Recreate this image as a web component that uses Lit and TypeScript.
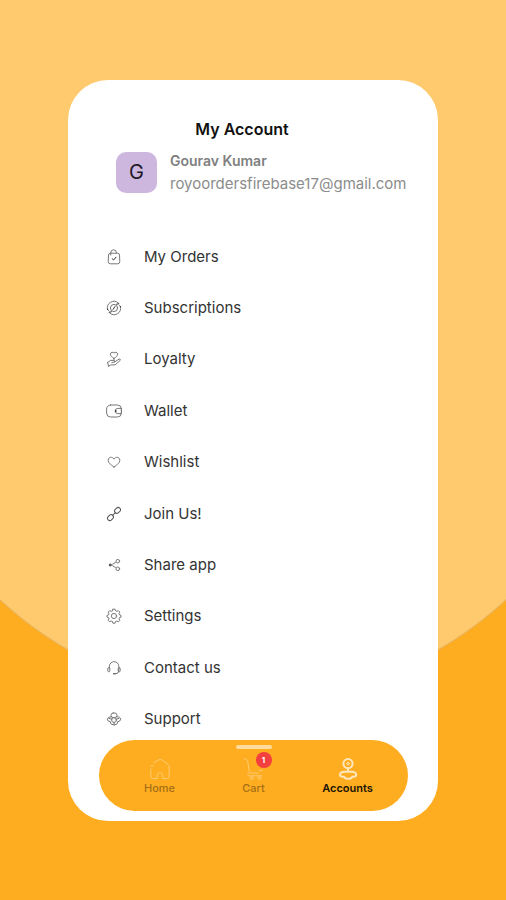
import { LitElement, html, css, svg, nothing, type SVGTemplateResult } from "lit";
import { customElement } from "lit/decorators.js";
import { classMap } from "lit/directives/class-map.js";

interface Entry {
  label: string;
  icon: SVGTemplateResult;
}

interface Tab extends Entry {
  active?: boolean;
  marked?: boolean;
  count?: number;
}

const entries: Entry[] = [
  {
    label: "My Orders",
    icon: svg`<path d="M4.4 4.2h7.2q1.8 0 1.9 1.8l.3 6.4q0 2.4-2.2 2.4H4.4q-2.2 0-2.2-2.4L2.500 6q.1-1.800 1.900-1.800z"/><path d="M4.800 6V3.600a2.800 2.800 0 0 1 5.600 0V4.200"/><path class="strong" d="M6.200 9.700l1.400 1.300 2.400-2.800"/>`,
  },
  {
    label: "Subscriptions",
    icon: svg`<path d="M1.600 9.600A6.600 6.600 0 0 1 12.600 3.200M14.400 6.400A6.600 6.600 0 0 1 3.400 12.800"/><circle cx="8" cy="8" r="3.600"/><path class="strong" d="M10.600 4.200l2.200-.4M5.400 11.800l-2.200.4M1.200 9.200l1.200 1M14.800 6.800l-1.200-1M9 6.600L7 9.400"/>`,
  },
  {
    label: "Loyalty",
    icon: svg`<path d="M8 7.400C5.600 5.800 4.400 4.800 4.400 3.200 4.400 1 7.200.6 8 2.200 8.800.6 11.600 1 11.600 3.200c0 1.600-1.200 2.600-3.600 4.200z"/><path d="M8 7.400v2"/><path d="M1.600 11.400l3-2h3.200q1.600.2.6 1.600l-2.600.6M8.600 11l4.600-3q1.600 0 1 1.400l-5 4.400-4.600.2-2 1.200M1.600 11.400l1 3.800"/>`,
  },
  {
    label: "Wallet",
    icon: svg`<rect x=".6" y="2" width="14.800" height="12" rx="4"/><path d="M15 5.400h-3.200a2.600 2.600 0 0 0 0 5.200H15z"/><circle class="strong" cx="9.600" cy="8" r=".4"/>`,
  },
  {
    label: "Wishlist",
    icon: svg`<path d="M8 13C4.400 10.600 2.200 8.600 2.200 6.200 2.200 2.800 6.600 2.200 8 5.200 9.400 2.200 13.800 2.800 13.800 6.200 13.800 8.600 11.600 10.600 8 13z"/>`,
  },
  {
    label: "Join Us!",
    icon: svg`<g class="medium" transform="rotate(-45 8 8)"><rect x="-.2" y="5.700" width="6.400" height="4.600" rx="2.300"/><rect x="9.800" y="5.700" width="6.400" height="4.600" rx="2.300"/><path d="M5.600 8h4.800"/></g>`,
  },
  {
    label: "Share app",
    icon: svg`<path d="M6.600 7.200l2.800-1.600M6.600 8.800l2.800 1.600"/><circle class="strong" cx="4.200" cy="8" r="1"/><circle cx="11.800" cy="4.200" r="1.800"/><circle cx="11.800" cy="11.800" r="1.800"/>`,
  },
  {
    label: "Settings",
    icon: svg`<path d="M6.900 1.200h2.200l.4 1.600 1.300.6 1.500-.8 1.500 1.500-.8 1.500.5 1.300 1.500.4v1.800l-1.500.5-.5 1.200.8 1.500-1.500 1.500-1.500-.8-1.300.5-.4 1.700H6.900l-.4-1.700-1.300-.5-1.500.8-1.500-1.500.8-1.500-.5-1.200L1 9.100V7.300l1.500-.4L3 5.600l-.8-1.500 1.500-1.500 1.500.8 1.300-.6z"/><circle cx="8" cy="8" r="2.600"/>`,
  },
  {
    label: "Contact us",
    icon: svg`<path d="M3.400 8.200V6.400a4.700 4.700 0 0 1 9.400 0v4.600q0 2.600-3.400 2.800"/><rect x="1.800" y="7.600" width="2" height="4.200" rx="1"/><rect x="12.200" y="7.600" width="2" height="4.200" rx="1"/><path class="strong" d="M7.400 13.800h1.800"/>`,
  },
  {
    label: "Support",
    icon: svg`<rect x="5" y="2" width="6" height="4.600" rx="2.200"/><path d="M5.400 5.800Q1.600 5.600 1.400 8.200q0 2.200 2.400 2.400M10.800 5.800q3.800-.2 3.800 2.400 0 2.200-2.400 2.400"/><circle cx="8" cy="9" r="2.400"/><path d="M4 10.600q.2 3.400 4 3.400t4-3.400M5.800 8.200L3 7.400M10.200 8.200l2.800-.8M8 11.400V14"/>`,
  },
];

const tabs: Tab[] = [
  {
    label: "Home",
    icon: svg`<path d="M1.800 11v7.600q0 1.900 2 1.900h4.400v-3.200q0-2.600 2.800-2.600t2.800 2.600v3.200h4.400q2 0 2-1.900V8.600q0-1.300-1-2l-6.200-4.600q-1.800-1.200-3.600 0L5 4.600M1.800 8h2.600"/>`,
  },
  {
    label: "Cart",
    icon: svg`<path d="M1.400.8q3 .4 3.400 3l1.400 9.600q.2 1.600 2 1.600H15M16.400 12.400h3.200M5.400 15q-1.800 2.800 1.200 2.800h12"/><circle cx="8.600" cy="20" r="1.500"/><circle cx="16.400" cy="20" r="1.500"/>`,
    marked: true,
    count: 1,
  },
  {
    label: "Accounts",
    icon: svg`<circle cx="11" cy="5.600" r="4.600"/><circle class="thin" cx="11" cy="5.600" r="1.200"/><path d="M11 10.200v3.400M6.800 13.800h8.400q4 .4 4 3 0 2-3 2h-1q-.8 2-4.200 2t-3.800-2H6q-3 0-3-2 0-2.600 3.800-3z"/>`,
    active: true,
  },
];

@customElement("account-menu")
export class AccountMenu extends LitElement {
  static styles = css`
    :host {
      display: flex;
      flex: 1;
    }
    .list {
      flex: 1;
      display: grid;
      grid-auto-rows: 1fr;
      margin: 0;
      padding: 0 0 0 38px;
      list-style: none;
    }
    .row {
      display: flex;
    }
    .link {
      flex: 1;
      display: flex;
      align-items: center;
      gap: 22px;
      color: #333;
      font-size: 15px;
      line-height: 20px;
      text-decoration: none;
    }
    .icon {
      width: 16px;
      height: 16px;
      fill: none;
      stroke: #777;
      stroke-width: 1;
      stroke-linecap: round;
      stroke-linejoin: round;
    }
    .medium {
      stroke: #555;
    }
    .strong {
      stroke: #333;
    }
  `;

  render() {
    return html`
      <ul class="list">
        ${entries.map(
          (entry) => html`
            <li class="row">
              <a class="link" href="#">
                <svg class="icon" viewBox="0 0 16 16" aria-hidden="true">${entry.icon}</svg>
                <span>${entry.label}</span>
              </a>
            </li>
          `
        )}
      </ul>
    `;
  }
}

@customElement("tab-bar")
export class TabBar extends LitElement {
  static styles = css`
    :host {
      display: block;
    }
    .bar {
      display: flex;
      justify-content: center;
      border-radius: 36px;
      background: #ffad20;
    }
    .tab {
      position: relative;
      flex: 0 1 94px;
      display: flex;
      flex-direction: column;
      align-items: center;
      gap: 1px;
      padding: 18px 0 16px;
      color: #a56f16;
      font-size: 11px;
      font-weight: 500;
      line-height: 14px;
      text-decoration: none;
    }
    .icon {
      width: 22px;
      height: 22px;
      fill: none;
      stroke: #ffcb72;
      stroke-width: 1;
      stroke-linecap: round;
      stroke-linejoin: round;
    }
    .active {
      color: #1c1304;
      font-weight: 600;
    }
    .active .icon {
      stroke: #ffe7bd;
      stroke-width: 2;
    }
    .thin {
      stroke-width: 1;
    }
    .marked::before {
      content: "";
      position: absolute;
      top: 5px;
      width: 36px;
      height: 4px;
      border-radius: 2px;
      background: #ffdc9e;
    }
    .badge {
      position: absolute;
      top: 12px;
      left: 50%;
      width: 16px;
      margin-left: 2px;
      border-radius: 8px;
      background: #f43f3f;
      color: #fff;
      font-size: 8px;
      font-weight: 700;
      line-height: 16px;
      text-align: center;
    }
  `;

  render() {
    return html`
      <nav class="bar">
        ${tabs.map(
          (tab) => html`
            <a
              class=${classMap({ tab: true, active: !!tab.active, marked: !!tab.marked })}
              href="#"
              aria-current=${tab.active ? "page" : nothing}
            >
              <svg class="icon" viewBox="0 0 22 22" aria-hidden="true">${tab.icon}</svg>
              <span>${tab.label}</span>
              ${tab.count ? html`<span class="badge">${tab.count}</span>` : nothing}
            </a>
          `
        )}
      </nav>
    `;
  }
}

@customElement("app-root")
export class AppRoot extends LitElement {
  static styles = css`
    :host {
      box-sizing: border-box;
      display: flex;
      min-height: 100vh;
      padding: 80px 68px 79px;
      font-family: Inter, "Liberation Sans", sans-serif;
      background:
        linear-gradient(#ffca6d, #ffca6d) top / 100% 327px no-repeat,
        radial-gradient(circle at 50% 327px, #ffca6d 371px, #e6b460 372px, #ffad20 373px);
    }
    .card {
      flex: 1;
      min-width: 0;
      display: flex;
      flex-direction: column;
      border-radius: 40px;
      background: #fff;
    }
    .title {
      margin: 0;
      padding: 39px 22px 0 0;
      font-size: 16px;
      font-weight: 600;
      line-height: 20px;
      text-align: center;
      color: #111;
    }
    .profile {
      display: flex;
      align-items: center;
      gap: 13px;
      padding: 10px 0 36px 48px;
    }
    .avatar {
      flex: none;
      width: 41px;
      border-radius: 10px;
      background: #cdb7df;
      color: #1d1724;
      font-size: 20px;
      line-height: 41px;
      text-align: center;
    }
    .name,
    .email {
      margin: 0;
      line-height: 23px;
    }
    .name {
      font-size: 14px;
      font-weight: 600;
      color: #808080;
    }
    .email {
      font-size: 15px;
      color: #8c8c8c;
    }
    .tabs {
      z-index: 1;
      margin: -5px 30px 10px 31px;
    }
  `;

  render() {
    return html`
      <main class="card">
        <h1 class="title">My Account</h1>
        <section class="profile">
          <span class="avatar" aria-hidden="true">G</span>
          <div>
            <p class="name">Gourav Kumar</p>
            <p class="email">royoordersfirebase17@gmail.com</p>
          </div>
        </section>
        <account-menu></account-menu>
        <tab-bar class="tabs"></tab-bar>
      </main>
    `;
  }
}
